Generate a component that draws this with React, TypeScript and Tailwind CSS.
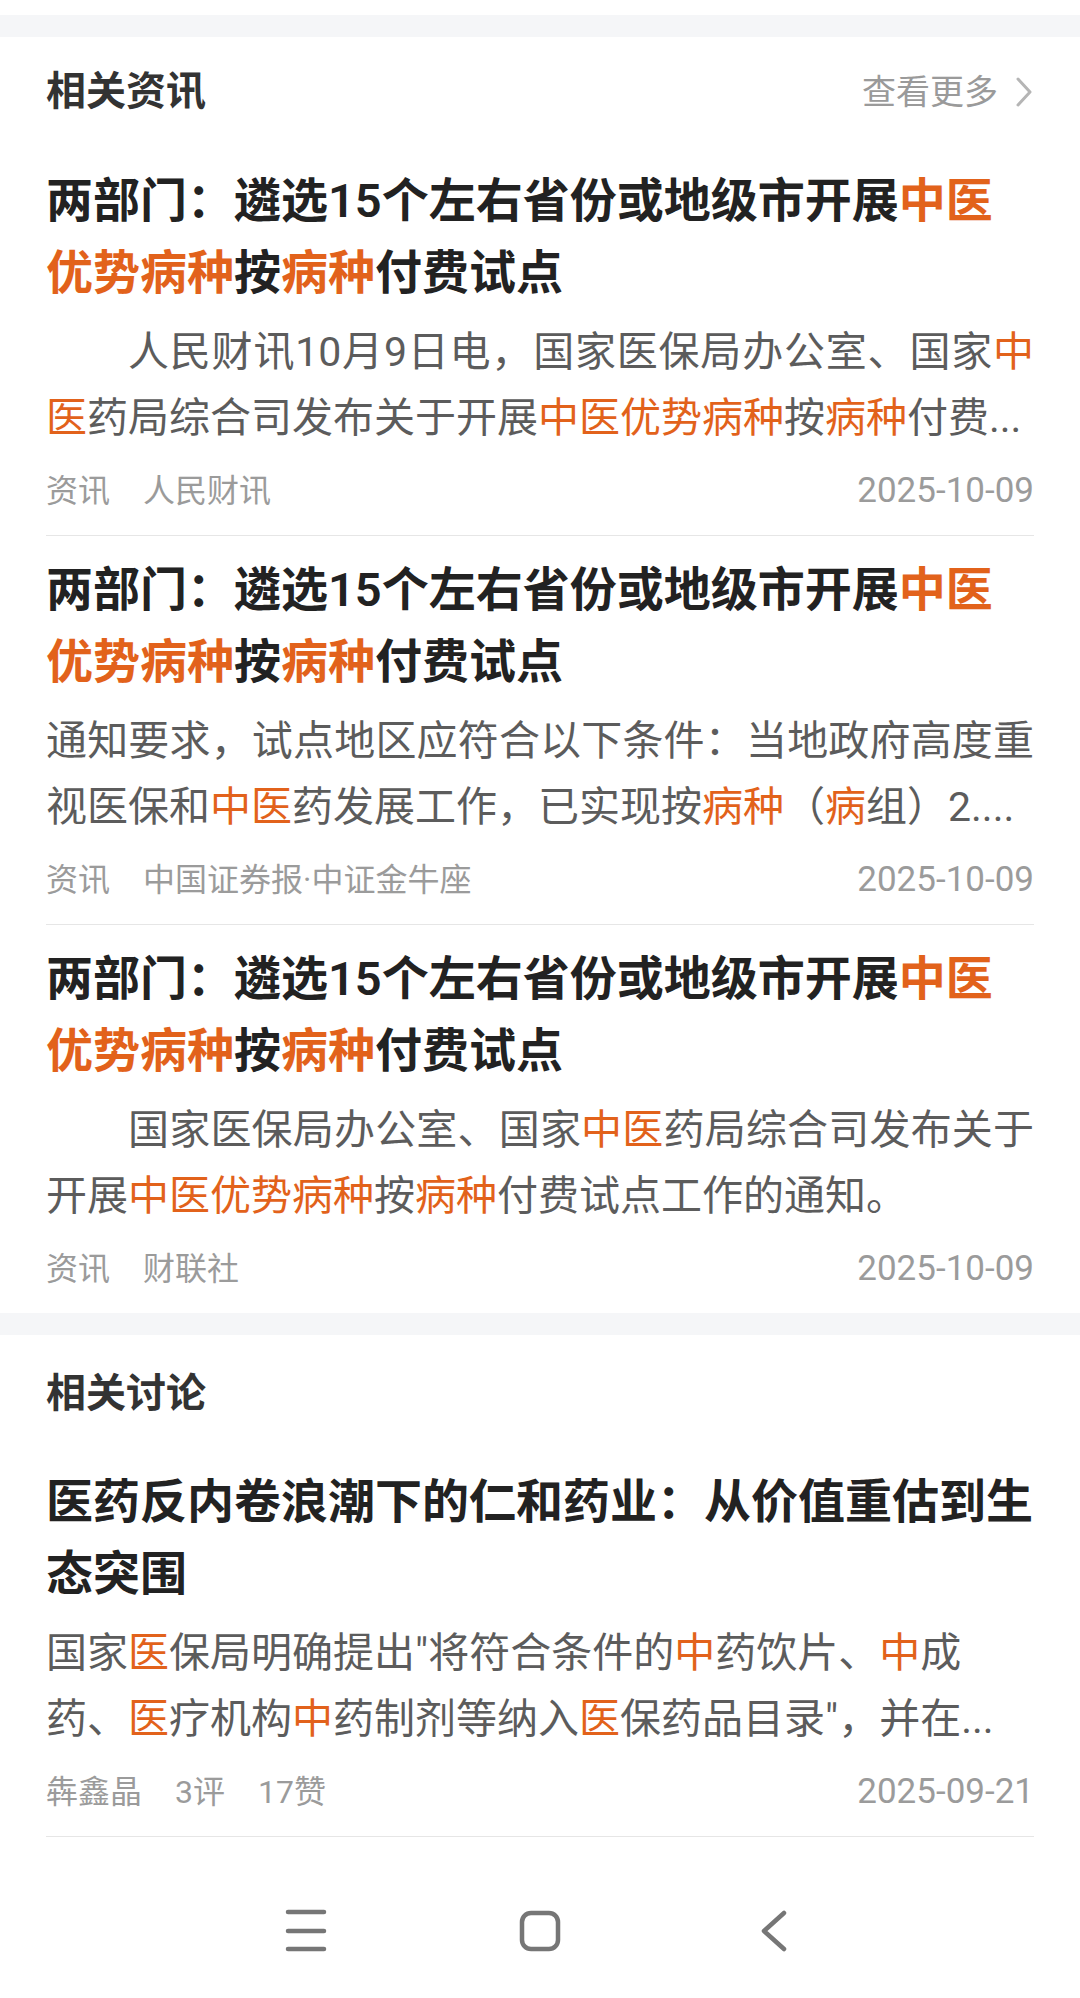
import React from 'react';

type BodyLine = { text: string; justify?: boolean; indent?: boolean };

type Item = {
  title: string[];
  body: BodyLine[];
  tags: string[];
  date: string;
};

const news: Item[] = [
  {
    title: ['两部门：遴选15个左右省份或地级市开展{中医}', '{优势病种}按{病种}付费试点'],
    body: [
      { text: '人民财讯10月9日电，国家医保局办公室、国家{中}', justify: true, indent: true },
      { text: '{医}药局综合司发布关于开展{中医优势病种}按{病种}付费...' },
    ],
    tags: ['资讯', '人民财讯'],
    date: '2025-10-09',
  },
  {
    title: ['两部门：遴选15个左右省份或地级市开展{中医}', '{优势病种}按{病种}付费试点'],
    body: [
      { text: '通知要求，试点地区应符合以下条件：当地政府高度重', justify: true },
      { text: '视医保和{中医}药发展工作，已实现按{病种}（{病}组）2....' },
    ],
    tags: ['资讯', '中国证券报·中证金牛座'],
    date: '2025-10-09',
  },
  {
    title: ['两部门：遴选15个左右省份或地级市开展{中医}', '{优势病种}按{病种}付费试点'],
    body: [
      { text: '国家医保局办公室、国家{中医}药局综合司发布关于', justify: true, indent: true },
      { text: '开展{中医优势病种}按{病种}付费试点工作的通知。' },
    ],
    tags: ['资讯', '财联社'],
    date: '2025-10-09',
  },
];

const discussion: Item = {
  title: ['医药反内卷浪潮下的仁和药业：从价值重估到生', '态突围'],
  body: [
    { text: '国家{医}保局明确提出"将符合条件的{中}药饮片、{中}成' },
    { text: '药、{医}疗机构{中}药制剂等纳入{医}保药品目录"，并在...' },
  ],
  tags: ['犇鑫晶', '3评', '17赞'],
  date: '2025-09-21',
};

function Rich({ text }: { text: string }) {
  const parts = text.split(/(\{[^}]*\})/);
  return (
    <>
      {parts.map((p, i) =>
        p.startsWith('{') ? (
          <span key={i} className="text-[#e2621b]">
            {p.slice(1, -1)}
          </span>
        ) : (
          <React.Fragment key={i}>{p}</React.Fragment>
        )
      )}
    </>
  );
}

function SectionHeader({ title, more, className }: { title: string; more?: boolean; className: string }) {
  return (
    <div className={`flex items-center justify-between px-[46px] ${className}`}>
      <h2 className="text-[40px] font-bold text-[#333333]">{title}</h2>
      {more && (
        <div className="flex items-center text-[34px] text-[#9a9a9a]">
          <span>查看更多</span>
          <svg width="20" height="32" viewBox="0 0 20 32" className="ml-[16px]">
            <path d="M4 3 L16 16 L4 29" fill="none" stroke="#b5b5b5" strokeWidth="3" strokeLinecap="round" strokeLinejoin="round" />
          </svg>
        </div>
      )}
    </div>
  );
}

function Article({ item, top, divider }: { item: Item; top: string; divider: boolean }) {
  return (
    <div className="px-[46px]">
      <div className={`${top} pb-[22px]`}>
        <div className="text-[47px] font-semibold leading-[72px] text-[#222222]">
          {item.title.map((line, i) => (
            <div key={i} className="whitespace-nowrap">
              <Rich text={line} />
            </div>
          ))}
        </div>
        <div className="mt-[10px] text-[41px] leading-[66px] text-[#5c5c5c]">
          {item.body.map((line, i) => (
            <div
              key={i}
              className={`whitespace-nowrap ${line.justify ? 'text-justify [text-align-last:justify]' : ''} ${line.indent ? 'indent-[2em]' : ''}`}
            >
              <Rich text={line.text} />
            </div>
          ))}
        </div>
        <div className="mt-[18px] flex h-[44px] items-center justify-between text-[#9b9b9b]">
          <div className="flex items-center gap-[33px] text-[32px]">
            {item.tags.map((t) => (
              <span key={t}>{t}</span>
            ))}
          </div>
          <span className="text-[35px]">{item.date}</span>
        </div>
      </div>
      {divider && <div className="h-px bg-[#e6e6e6]" />}
    </div>
  );
}

export default function App() {
  return (
    <div className="min-h-[1998px] w-[1080px] bg-white font-['Roboto','Noto_Sans_CJK_SC',sans-serif]">
      <div className="h-[15px]" />
      <div className="h-[22px] bg-[#f5f6f8]" />

      <section>
        <SectionHeader title="相关资讯" more className="h-[110px]" />
        {news.map((item, i) => (
          <Article key={i} item={item} top="pt-[18px]" divider={i < news.length - 1} />
        ))}
      </section>

      <div className="h-[22px] bg-[#f5f6f8]" />

      <section>
        <SectionHeader title="相关讨论" className="h-[118px]" />
        <Article item={discussion} top="pt-[13px]" divider />
      </section>

      {/* system nav bar */}
      <div className="mt-[54px] flex h-[80px] items-center justify-center">
        <div className="flex w-[234px] justify-center">
          <svg width="42" height="44" viewBox="0 0 42 44">
            <g stroke="#767676" strokeWidth="4.5" strokeLinecap="round">
              <line x1="3" y1="3" x2="39" y2="3" />
              <line x1="3" y1="22" x2="39" y2="22" />
              <line x1="3" y1="40" x2="39" y2="40" />
            </g>
          </svg>
        </div>
        <div className="flex w-[234px] justify-center">
          <svg width="42" height="42" viewBox="0 0 42 42">
            <rect x="3" y="3" width="36" height="36" rx="9" fill="none" stroke="#767676" strokeWidth="4.5" />
          </svg>
        </div>
        <div className="flex w-[234px] justify-center">
          <svg width="28" height="42" viewBox="0 0 28 42">
            <path d="M24 3 L4 21 L24 39" fill="none" stroke="#767676" strokeWidth="4.5" strokeLinecap="round" strokeLinejoin="round" />
          </svg>
        </div>
      </div>
    </div>
  );
}
